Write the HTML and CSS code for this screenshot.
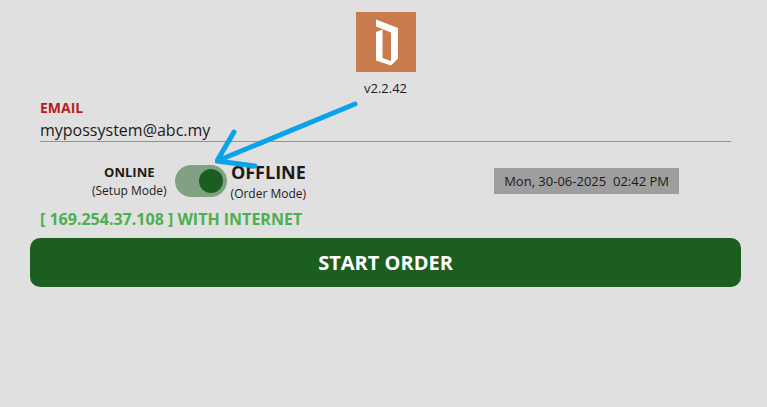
FILE: index.html
```
<!DOCTYPE html>
<html lang="en">
<head>
<meta charset="utf-8">
<meta name="viewport" content="width=device-width, initial-scale=1">
<title>Start Order</title>
<link rel="stylesheet" href="styles.css">
</head>
<body>
<main class="page">
  <header class="brand">
    <svg class="logo" viewBox="0 0 60 60" aria-hidden="true">
      <rect width="60" height="60" fill="#c97b4e"/>
      <path fill="#fff" d="M20 7.500L42 16V46.500L35 53.500V20.500L20 14.500Z"/>
      <path fill="#fff" d="M20 20L26.500 17.500V46L35 49V53.500L20 48.500Z"/>
    </svg>
    <span class="version">v2.2.42</span>
  </header>

  <div class="field">
    <label class="field-label" for="email">EMAIL</label>
    <input class="field-input" id="email" type="email" value="mypossystem@abc.my">
  </div>

  <div class="status">
    <div class="mode">
      <label class="mode-text" for="mode"><strong class="mode-name">ONLINE</strong><span class="mode-note">(Setup Mode)</span></label>
      <span class="switch-wrap">
        <input class="switch" id="mode" type="checkbox" role="switch" checked>
        <svg class="arrow" viewBox="0 0 146 70" aria-hidden="true">
          <path d="M140 5L2 62M19 33L2 62L40 67" fill="none" stroke="#0aa2e8" stroke-width="5" stroke-linecap="round" stroke-linejoin="round"/>
        </svg>
      </span>
      <label class="mode-text" for="mode"><strong class="mode-name mode-name-active">OFFLINE</strong><span class="mode-note">(Order Mode)</span></label>
    </div>
    <time class="clock" datetime="2025-06-30T14:42">Mon, 30-06-2025&nbsp; 02:42 PM</time>
  </div>

  <p class="network">[ 169.254.37.108 ] WITH INTERNET</p>
  <button class="start" type="button">START ORDER</button>
</main>
</body>
</html>
```
FILE: styles.css
```
* {
  box-sizing: border-box;
}

body {
  margin: 0;
  background: #e0e0e0;
  color: #1d1a1a;
  font-family: "Open Sans", "Noto Sans", sans-serif;
}

.page {
  padding: 12px 26px 12px 30px;
}

.brand {
  display: flex;
  flex-direction: column;
  align-items: center;
  gap: 8px;
}

.logo {
  width: 60px;
  height: 60px;
}

.version {
  font-size: 13px;
  line-height: 16px;
}

.field {
  display: flex;
  flex-direction: column;
  margin: 2px 10px 0;
}

.field-label {
  color: #b71c1c;
  font-size: 14px;
  font-weight: 700;
  line-height: 20px;
}

.field-input {
  width: 100%;
  height: 24px;
  padding: 0;
  border: 0;
  border-bottom: 1px solid #929292;
  background: transparent;
  color: inherit;
  font-family: inherit;
  font-size: 16px;
  outline: 0;
}

.status {
  display: flex;
  align-items: center;
  justify-content: space-between;
  padding: 0 62px;
  margin-top: 17px;
}

.mode {
  display: flex;
  align-items: center;
}

.mode-text {
  display: flex;
  flex-direction: column;
  align-items: center;
}

.mode-name {
  font-size: 13px;
  line-height: 20px;
}

.mode-name-active {
  font-size: 18px;
  line-height: 26px;
}

.mode-note {
  font-size: 12px;
  line-height: 18px;
}

.switch-wrap {
  position: relative;
  display: flex;
  margin: 0 4px 0 8px;
}

.switch {
  appearance: none;
  display: flex;
  align-items: center;
  justify-content: flex-end;
  width: 52px;
  height: 32px;
  margin: 0;
  padding: 4px;
  border-radius: 16px;
  background: #80a182;
}

.switch::before {
  content: "";
  width: 24px;
  height: 24px;
  border-radius: 50%;
  background: #1b5e20;
}

.switch:not(:checked) {
  justify-content: flex-start;
}

.arrow {
  position: absolute;
  left: 40px;
  bottom: 28px;
  width: 146px;
  height: 70px;
  pointer-events: none;
}

.clock {
  padding: 4px 10px;
  background: #9e9e9e;
  font-size: 13px;
  line-height: 18px;
}

.network {
  margin: 6px 10px 9px;
  color: #4caf50;
  font-size: 16px;
  font-weight: 700;
  line-height: 20px;
}

.start {
  display: block;
  width: 100%;
  height: 49px;
  border: 0;
  border-radius: 10px;
  background: #1b5e20;
  color: #fff;
  font-family: inherit;
  font-size: 20px;
  font-weight: 700;
}
```
